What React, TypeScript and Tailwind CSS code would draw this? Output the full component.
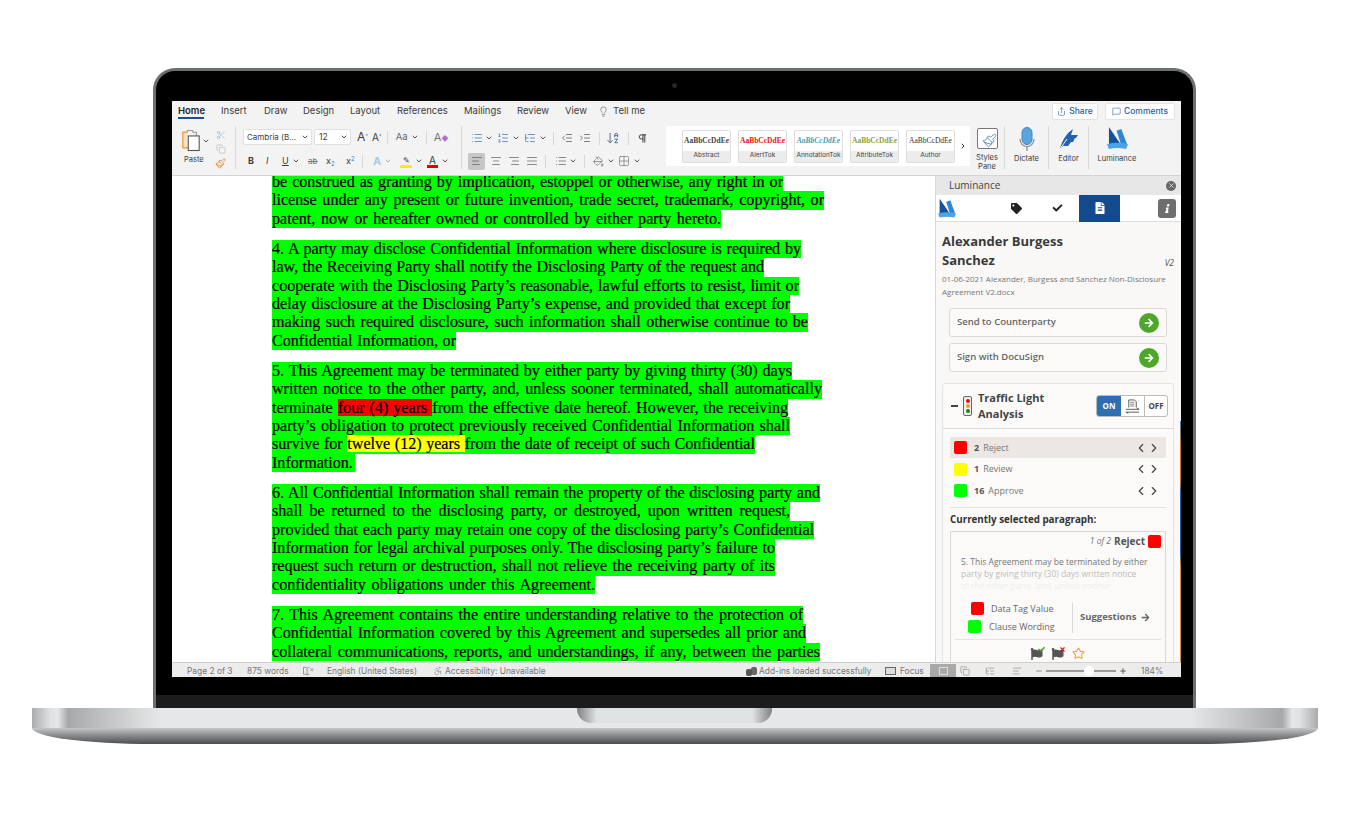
import {
  Accessibility,
  AlignCenter,
  AlignJustify,
  AlignLeft,
  AlignRight,
  ArrowDownAZ,
  ChevronDown,
  ChevronLeft,
  ChevronRight,
  Copy,
  Grid2x2,
  IndentDecrease,
  IndentIncrease,
  Lightbulb,
  List,
  ListOrdered,
  ListTree,
  MessageSquare,
  Minus,
  PaintBucket,
  Paintbrush,
  Pilcrow,
  Plus,
  Scissors,
  Share,
  Star,
  X,
} from 'lucide-react'
import { FaArrowRight, FaCheck, FaFileAlt, FaFlag, FaInfo, FaTag } from 'react-icons/fa'

type Seg = [string, 'r' | 'y'] | string
type Line = { w: number; t: Seg[] }

const PARAGRAPHS: Line[][] = [
  [
    { w: 511, t: ['be construed as granting by implication, estoppel or otherwise, any right in or'] },
    { w: 552, t: ['license under any present or future invention, trade secret, trademark, copyright, or'] },
    { w: 449, t: ['patent, now or hereafter owned or controlled by either party hereto.'] },
  ],
  [
    { w: 529, t: ['4. A party may disclose Confidential Information where disclosure is required by'] },
    { w: 492, t: ['law, the Receiving Party shall notify the Disclosing Party of the request and'] },
    { w: 527, t: ['cooperate with the Disclosing Party’s reasonable, lawful efforts to resist, limit or'] },
    { w: 518, t: ['delay disclosure at the Disclosing Party’s expense, and provided that except for'] },
    { w: 536, t: ['making such required disclosure, such information shall otherwise continue to be'] },
    { w: 184, t: ['Confidential Information, or'] },
  ],
  [
    { w: 520, t: ['5. This Agreement may be terminated by either party by giving thirty (30) days'] },
    { w: 550, t: ['written notice to the other party, and, unless sooner terminated, shall automatically'] },
    { w: 516, t: ['terminate ', ['four (4) years ', 'r'], 'from the effective date hereof. However, the receiving'] },
    { w: 518, t: ['party’s obligation to protect previously received Confidential Information shall'] },
    { w: 483, t: ['survive for ', ['twelve (12) years ', 'y'], 'from the date of receipt of such Confidential'] },
    { w: 83, t: ['Information.'] },
  ],
  [
    { w: 548, t: ['6. All Confidential Information shall remain the property of the disclosing party and'] },
    { w: 518, t: ['shall be returned to the disclosing party, or destroyed, upon written request,'] },
    { w: 542, t: ['provided that each party may retain one copy of the disclosing party’s Confidential'] },
    { w: 503, t: ['Information for legal archival purposes only. The disclosing party’s failure to'] },
    { w: 503, t: ['request such return or destruction, shall not relieve the receiving party of its'] },
    { w: 323, t: ['confidentiality obligations under this Agreement.'] },
  ],
  [
    { w: 531, t: ['7. This Agreement contains the entire understanding relative to the protection of'] },
    { w: 534, t: ['Confidential Information covered by this Agreement and supersedes all prior and'] },
    { w: 548, t: ['collateral communications, reports, and understandings, if any, between the parties'] },
  ],
]

function LuminanceLogo({ className }: { className: string }) {
  return (
    <svg viewBox="0 0 22 24" className={className}>
      <path d="M2 0 L15 19 L2 19 Z" fill="#14539b" />
      <path d="M10 4 L15 2 L21 18 L15 19 Z" fill="#2f86d6" />
      <path d="M0 18 Q11 15 22 18 L20 23 Q11 21 2 23 Z" fill="#4ba3e8" />
    </svg>
  )
}

function PasteIcon() {
  return (
    <svg viewBox="0 0 22 24" className="h-[23px] w-[21px]">
      <path d="M7 3 H2 V20 H8" fill="#fbe3c6" stroke="#f0a050" strokeWidth="1.6" />
      <path d="M7 3 V1 H13 V3 H17 V7" fill="none" stroke="#999" strokeWidth="1.2" />
      <rect x="8" y="7" width="12" height="16" fill="#fff" stroke="#555" strokeWidth="1.2" />
    </svg>
  )
}

function MicIcon() {
  return (
    <svg viewBox="0 0 16 24" className="h-[24px] w-[16px]">
      <rect x="3" y="0.5" width="10" height="17" rx="5" fill="#5aa5e0" stroke="#3d85c0" />
      <path d="M1 12 C1 22 15 22 15 12" fill="none" stroke="#888" strokeWidth="1.2" />
      <path d="M8 19 V24" stroke="#888" strokeWidth="1.2" />
    </svg>
  )
}

function BookXIcon() {
  return (
    <svg viewBox="0 0 12 10" className="h-[10px] w-[11px]" fill="none" stroke="#777" strokeWidth="0.8">
      <path d="M0.5 1 H3.5 L4.5 2 V9.5 L3.5 8.5 H0.5 Z" />
      <path d="M4.5 2 L5.5 1 H7 M5.5 8.5 H7 M4.5 9.5 L5.5 8.5" />
      <path d="M8 2 L11 5 M11 2 L8 5" />
    </svg>
  )
}

function CompareIcon() {
  return (
    <svg viewBox="0 0 16 16" className="h-[15px] w-[15px]" fill="none" stroke="#444" strokeWidth="0.9">
      <path d="M4 9 V1 H10 L12 3 V9" />
      <path d="M5.5 3.5 H10 M5.5 5.5 H10 M5.5 7.5 H10" strokeWidth="0.7" />
      <path d="M1 11 H15 M12.5 9.5 L15 11 M1 14 H15 M3.5 15.5 L1 14" />
    </svg>
  )
}

function Sep({ className }: { className: string }) {
  return <div className={`w-px shrink-0 bg-[#d8d8d8] ${className}`} />
}

function Caret({ className = 'ml-[2px]' }: { className?: string }) {
  return <ChevronDown className={`h-[8px] w-[8px] shrink-0 text-[#555] ${className}`} strokeWidth={3} />
}

function StyleCard(props: { label: string; sample: string; color: string; weight: string; italic?: boolean }) {
  return (
    <div className="flex h-[33px] w-[49px] flex-col overflow-hidden rounded-[2px] border border-[#dedede] bg-white">
      <div
        className={`flex h-[21px] items-center justify-center overflow-hidden whitespace-nowrap font-['Liberation_Serif',serif] text-[7.5px] ${props.color} ${props.weight} ${props.italic ? 'italic' : ''}`}
      >
        {props.sample}
      </div>
      <div className="flex h-[11px] items-center justify-center bg-[#ececec] text-[6.5px] text-[#444]">{props.label}</div>
    </div>
  )
}

function Ribbon() {
  return (
    <div className="h-[75px] shrink-0 border-b border-[#d4d4d4] bg-[#f3f3f3] font-['Inter',sans-serif] text-[#3b3b3b]">
      <div className="flex h-[25px] items-center pb-[5px] pl-[6px] text-[9.5px]">
        <div className="relative w-[43px] font-semibold text-[#222]">
          Home
          <div className="absolute left-0 top-[13px] h-[2px] w-[26px] bg-[#1f4e8c]" />
        </div>
        <div className="w-[43px]">Insert</div>
        <div className="w-[39px]">Draw</div>
        <div className="w-[47px]">Design</div>
        <div className="w-[47px]">Layout</div>
        <div className="w-[67px]">References</div>
        <div className="w-[53px]">Mailings</div>
        <div className="w-[48px]">Review</div>
        <div className="w-[33px]">View</div>
        <Lightbulb className="mr-[4px] h-[11px] w-[11px] text-[#666]" strokeWidth={1.5} />
        <div>Tell me</div>
        <div className="ml-auto mr-[6px] flex items-center gap-[7px] text-[#2a5c9a]">
          <div className="flex h-[17px] w-[46px] items-center justify-center gap-[3px] rounded-[2px] border border-[#e2e2e2] bg-white text-[8.5px] font-medium">
            <Share className="h-[9px] w-[9px]" strokeWidth={1.5} />
            Share
          </div>
          <div className="flex h-[17px] w-[70px] items-center justify-center gap-[3px] rounded-[2px] border border-[#e2e2e2] bg-white text-[8.5px] font-medium">
            <MessageSquare className="h-[9px] w-[9px]" strokeWidth={1.5} />
            Comments
          </div>
        </div>
      </div>

      <div className="flex h-[49px] items-start">
        {/* paste */}
        <div className="flex h-[46px] w-[63px] shrink-0 pl-[9px] pt-[3px]">
          <div className="w-[29px]">
            <div className="flex items-center">
              <PasteIcon />
              <Caret className="ml-[1px]" />
            </div>
            <div className="mt-[2px] pl-[3px] text-[7.5px]">Paste</div>
          </div>
          <div className="ml-[5px] flex flex-col items-center gap-[4px] pt-[1px]">
            <Scissors className="h-[10px] w-[10px] text-[#8db5d8]" strokeWidth={1.5} />
            <Copy className="h-[10px] w-[10px] text-[#b5b5b5]" strokeWidth={1.5} />
            <Paintbrush className="h-[11px] w-[11px] text-[#e58a2e]" strokeWidth={2} />
          </div>
        </div>
        <Sep className="h-[43px]" />

        {/* font */}
        <div className="h-[46px] w-[225px] shrink-0 pl-[7px] pt-[2px]">
          <div className="flex h-[18px] items-center">
            <div className="flex h-[16px] w-[69px] items-center justify-between whitespace-nowrap rounded-[2px] border border-[#e0e0e0] bg-white pl-[3px] pr-[2px] text-[8px]">
              Cambria (B...
              <Caret />
            </div>
            <div className="ml-[2px] flex h-[16px] w-[37px] items-center justify-between rounded-[2px] border border-[#e0e0e0] bg-white pl-[4px] pr-[2px] text-[8.5px]">
              12
              <Caret />
            </div>
            <div className="ml-[6px] text-[12px] leading-[14px]">A<sup className="text-[6px] text-[#4a7fb5]">^</sup></div>
            <div className="ml-[4px] text-[10px] leading-[14px]">A<sup className="text-[6px] text-[#4a7fb5]">˅</sup></div>
            <Sep className="ml-[5px] h-[13px]" />
            <div className="ml-[8px] flex items-center text-[9.5px] text-[#666]">Aa<Caret className="ml-[3px]" /></div>
            <Sep className="ml-[7px] h-[13px]" />
            <div className="ml-[7px] text-[11px] text-[#777]">A<span className="text-[7px] text-[#b36bd0]">◆</span></div>
          </div>
          <div className="mt-[6px] flex h-[18px] items-center pl-[5px] text-[9px]">
            <div className="w-[18px] font-bold">B</div>
            <div className="w-[16px] italic">I</div>
            <div className="flex w-[26px] items-center underline">U<Caret className="ml-[3px]" /></div>
            <div className="w-[18px] text-[8px] text-[#777] line-through">ab</div>
            <div className="w-[20px]">x<sub className="text-[6px] text-[#4a7fb5]">2</sub></div>
            <div className="w-[14px]">x<sup className="text-[6px] text-[#4a7fb5]">2</sup></div>
            <Sep className="ml-[2px] h-[13px]" />
            <div className="ml-[10px] flex w-[27px] items-center text-[11px] font-bold text-[#a9c9e6]">A<Caret className="ml-[3px] opacity-40" /></div>
            <div className="flex w-[27px] items-center">
              <div className="w-[12px] border-b-[3px] border-[#ffee00] text-center text-[8px] leading-[10px]">✎</div>
              <Caret className="ml-[3px]" />
            </div>
            <div className="flex items-center">
              <div className="w-[11px] border-b-[3px] border-[#e00000] text-center text-[10px] leading-[10px]">A</div>
              <Caret className="ml-[3px]" />
            </div>
          </div>
        </div>
        <Sep className="h-[43px]" />

        {/* paragraph */}
        <div className="h-[46px] w-[204px] shrink-0 pl-[9px] pt-[4px]">
          <div className="flex h-[16px] items-center text-[#555]">
            <List className="h-[12px] w-[12px] text-[#3a78b5]" strokeWidth={1.5} />
            <Caret className="ml-[2px]" />
            <ListOrdered className="ml-[4px] h-[12px] w-[12px] text-[#3a78b5]" strokeWidth={1.5} />
            <Caret className="ml-[3px]" />
            <ListTree className="ml-[4px] h-[12px] w-[12px] text-[#3a78b5]" strokeWidth={1.5} />
            <Caret className="ml-[3px]" />
            <Sep className="ml-[6px] h-[13px]" />
            <IndentDecrease className="ml-[7px] h-[12px] w-[12px]" strokeWidth={1.5} />
            <IndentIncrease className="ml-[6px] h-[12px] w-[12px]" strokeWidth={1.5} />
            <Sep className="ml-[8px] h-[13px]" />
            <ArrowDownAZ className="ml-[6px] h-[14px] w-[14px] text-[#3a5f8a]" strokeWidth={1.5} />
            <Sep className="ml-[8px] h-[13px]" />
            <Pilcrow className="ml-[8px] h-[11px] w-[11px] text-[#333]" strokeWidth={2} />
          </div>
          <div className="mt-[6px] flex h-[18px] items-center text-[#666]">
            <div className="-ml-[3px] flex h-[17px] w-[17px] items-center justify-center rounded-[2px] bg-[#c6c6c6]">
              <AlignLeft className="h-[12px] w-[12px]" strokeWidth={1.5} />
            </div>
            <AlignCenter className="ml-[5px] h-[12px] w-[12px]" strokeWidth={1.5} />
            <AlignRight className="ml-[6px] h-[12px] w-[12px]" strokeWidth={1.5} />
            <AlignJustify className="ml-[6px] h-[12px] w-[12px]" strokeWidth={1.5} />
            <Sep className="ml-[7px] h-[13px]" />
            <List className="ml-[9px] h-[12px] w-[12px]" strokeWidth={1.5} />
            <Caret className="ml-[2px]" />
            <Sep className="ml-[7px] h-[13px]" />
            <PaintBucket className="ml-[8px] h-[11px] w-[11px]" strokeWidth={1.5} />
            <Caret className="ml-[3px]" />
            <Grid2x2 className="ml-[3px] h-[12px] w-[12px]" strokeWidth={1.2} />
            <Caret className="ml-[3px]" />
          </div>
        </div>

        {/* styles */}
        <div className="flex h-[40px] w-[304px] shrink-0 items-center rounded-[1px] bg-white pl-[16px]">
          <div className="flex gap-[7px]">
            <StyleCard label="Abstract" sample="AaBbCcDdEe" color="text-[#444]" weight="font-bold" />
            <StyleCard label="AlertTok" sample="AaBbCcDdEe" color="text-[#f01010]" weight="font-bold" />
            <StyleCard label="AnnotationTok" sample="AaBbCcDdEe" color="text-[#4a9db0]" weight="font-bold" italic />
            <StyleCard label="AttributeTok" sample="AaBbCcDdEe" color="text-[#8aa040]" weight="font-bold" />
            <StyleCard label="Author" sample="AaBbCcDdEe" color="text-[#333]" weight="font-normal" />
          </div>
          <ChevronRight className="ml-[4px] h-[8px] w-[8px]" strokeWidth={3} />
        </div>

        <div className="flex h-[46px] w-[34px] shrink-0 flex-col items-center pt-[2px] text-[7.5px] leading-[9px]">
          <div className="flex h-[21px] w-[21px] items-end justify-end rounded-[2px] border border-[#777] bg-white">
            <Paintbrush className="h-[15px] w-[15px] text-[#3a78b5]" strokeWidth={1.3} />
          </div>
          <div className="mt-[4px] text-center">Styles<br />Pane</div>
        </div>
        <Sep className="h-[43px]" />
        <div className="flex h-[46px] w-[43px] shrink-0 flex-col items-center pt-[1px] text-[7.5px]">
          <MicIcon />
          <div className="mt-[2px]">Dictate</div>
        </div>
        <Sep className="h-[43px]" />
        <div className="flex h-[46px] w-[39px] shrink-0 flex-col items-center pt-[2px] text-[7.5px]">
          <svg viewBox="0 0 22 22" className="h-[22px] w-[22px]">
            <path d="M2 21 C4 12 9 5 15 1 L13 7 L20 7 L18 10 L12 10 L17 10 L15 14 L9 14 L13 14 L10 18 L5 18 Z" fill="#1f63b5" />
            <path d="M2 21 L9 11" stroke="#fff" strokeWidth="1" />
          </svg>
          <div className="mt-[3px]">Editor</div>
        </div>
        <Sep className="h-[43px]" />
        <div className="flex h-[46px] w-[56px] shrink-0 flex-col items-center pt-[1px] text-[7.5px]">
          <LuminanceLogo className="h-[23px] w-[21px]" />
          <div className="mt-[3px]">Luminance</div>
        </div>
      </div>
    </div>
  )
}

function Doc() {
  return (
    <div className="h-full w-[763px] shrink-0 overflow-hidden bg-white pl-[100px] font-['Liberation_Serif',serif] text-[16.1px] text-black [-webkit-text-stroke:0.2px_black]">
      <div className="-mt-[3px]">
        {PARAGRAPHS.map((lines, i) => (
          <div key={i} className="mb-[11.7px]">
            {lines.map((line, j) => (
              <div
                key={j}
                className="h-[18.4px] whitespace-nowrap bg-[#00ff00] leading-[18.4px] [text-align-last:justify]"
                style={{ width: line.w }}
              >
                {line.t.map((seg, k) =>
                  typeof seg === 'string' ? (
                    <span key={k}>{seg}</span>
                  ) : (
                    <span key={k} className={seg[1] === 'r' ? 'bg-[#ff0000]' : 'bg-[#ffff00]'}>
                      {seg[0]}
                    </span>
                  ),
                )}
              </div>
            ))}
          </div>
        ))}
      </div>
    </div>
  )
}

function Swatch({ color, className = '' }: { color: string; className?: string }) {
  return <div className={`h-[13px] w-[13px] shrink-0 rounded-[2px] ${color} ${className}`} />
}

function GreenButton({ label, className }: { label: string; className: string }) {
  return (
    <div className={`flex h-[29px] w-[218px] items-center justify-between rounded-[3px] border border-[#d9d9d9] bg-[#fbfaf8] pl-[7px] pr-[7px] text-[9.5px] font-semibold text-[#666] ${className}`}>
      {label}
      <div className="flex h-[20px] w-[20px] items-center justify-center rounded-full bg-[#4ea72a]">
        <FaArrowRight className="h-[10px] w-[10px] text-white" />
      </div>
    </div>
  )
}

function Nav() {
  return (
    <div className="ml-auto flex items-center text-[#444]">
      <ChevronLeft className="h-[14px] w-[14px]" strokeWidth={2} />
      <ChevronRight className="-ml-[1px] h-[14px] w-[14px]" strokeWidth={2} />
    </div>
  )
}

function Panel() {
  return (
    <div className="relative h-full flex-1 overflow-hidden border-l border-[#d6d6d6] bg-[#f9f8f6] font-['Open_Sans',sans-serif]">
      <div className="flex h-[19px] items-center justify-between bg-[#e7e7e7] pl-[13px] pr-[5px] text-[10px] text-[#444]">
        Luminance
        <div className="flex h-[10px] w-[10px] items-center justify-center rounded-full bg-[#666]">
          <X className="h-[7px] w-[7px] text-[#e7e7e7]" strokeWidth={3} />
        </div>
      </div>
      <div className="flex h-[27px] items-center border-b border-[#dedede] bg-white">
        <LuminanceLogo className="ml-[2px] h-[23px] w-[18px]" />
        <FaTag className="ml-[55px] h-[11px] w-[11px] text-[#222]" />
        <FaCheck className="ml-[30px] h-[10px] w-[11px] text-[#222]" />
        <div className="ml-[16px] flex h-[27px] w-[41px] items-center justify-center bg-[#134a8e]">
          <FaFileAlt className="h-[12px] w-[10px] text-white" />
        </div>
        <div className="ml-[38px] flex h-[19px] w-[18px] items-center justify-center rounded-[3px] bg-[#6e6e6e]">
          <FaInfo className="h-[9px] w-[9px] -skew-x-12 text-white" />
        </div>
      </div>

      <div className="pl-[6px] pr-[6px]">
        <div className="pt-[10px] text-[13px] font-bold leading-[19px] text-[#3a3a3a]">Alexander Burgess</div>
        <div className="flex items-end justify-between pr-[1px] text-[13px] font-bold leading-[19px] text-[#3a3a3a]">
          Sanchez
          <span className="text-[8.5px] font-normal italic leading-[14px] text-[#555]">V2</span>
        </div>
        <div className="mt-[2px] text-[8px] leading-[13px] text-[#777]">
          01-06-2021 Alexander, Burgess and Sanchez Non-Disclosure<br />Agreement V2.docx
        </div>
        <GreenButton label="Send to Counterparty" className="ml-[7px] mt-[10px]" />
        <GreenButton label="Sign with DocuSign" className="ml-[7px] mt-[6px]" />

        <div className="mt-[11px] h-[300px] w-[232px] rounded-t-[3px] border border-b-0 border-[#e4e4e4] bg-[#fbfaf8]">
          <div className="flex h-[45px] items-center border-b border-[#dcdcdc] pl-[8px]">
            <div className="h-[2px] w-[7px] bg-[#444]" />
            <div className="ml-[5px] flex h-[20px] w-[9px] flex-col items-center justify-center gap-[1px] rounded-[2px] border border-[#666] bg-[#eee]">
              <div className="h-[4px] w-[4px] rounded-full bg-[#e01010]" />
              <div className="h-[4px] w-[4px] rounded-full bg-[#f0a020]" />
              <div className="h-[4px] w-[4px] rounded-full bg-[#208020]" />
            </div>
            <div className="ml-[6px] w-[118px] text-[11px] font-bold leading-[16px] text-[#444]">
              Traffic Light<br />Analysis
            </div>
            <div className="flex h-[22px] w-[72px] overflow-hidden rounded-[3px] border border-[#bbb] bg-white text-[8px] font-bold">
              <div className="flex w-[24px] items-center justify-center bg-[#2f6eb0] text-white">ON</div>
              <div className="flex w-[24px] items-center justify-center border-r border-[#bbb] text-[#444]">
                <CompareIcon />
              </div>
              <div className="flex flex-1 items-center justify-center text-[#444]">OFF</div>
            </div>
          </div>

          <div className="px-[7px] pt-[8px]">
            <div className="flex h-[21px] items-center bg-[#ece7e3] pl-[4px] pr-[5px] text-[9px] text-[#777]">
              <Swatch color="bg-[#ff0000]" />
              <span className="ml-[7px] font-bold text-[#555]">2</span>
              <span className="ml-[4px]">Reject</span>
              <Nav />
            </div>
            <div className="flex h-[22px] items-center pl-[4px] pr-[5px] text-[9px] text-[#777]">
              <Swatch color="bg-[#ffff00]" />
              <span className="ml-[7px] font-bold text-[#555]">1</span>
              <span className="ml-[4px]">Review</span>
              <Nav />
            </div>
            <div className="flex h-[21px] items-center pl-[4px] pr-[5px] text-[9px] text-[#777]">
              <Swatch color="bg-[#00ff00]" />
              <span className="ml-[7px] font-bold text-[#555]">16</span>
              <span className="ml-[4px]">Approve</span>
              <Nav />
            </div>

            <div className="mt-[6px] border-t border-[#e2e2e2] pt-[5px] text-[9.8px] font-bold leading-[14px] text-[#333]">
              Currently selected paragraph:
            </div>

            <div className="mt-[4px] h-[141px] border border-[#d8d8d8] px-[4px] pt-[3px]">
              <div className="flex h-[13px] items-center justify-end text-[8.5px] italic text-[#777]">
                1 of 2
                <span className="ml-[3px] text-[10px] font-bold not-italic text-[#555]">Reject</span>
                <Swatch color="bg-[#ff0000]" className="ml-[3px]" />
              </div>
              <div className="mt-[8px] h-[36px] overflow-hidden pl-[6px] text-[8.5px] leading-[12px]">
                <div className="text-[#777]">5. This Agreement may be terminated by either</div>
                <div className="text-[#bbb]">party by giving thirty (30) days written notice</div>
                <div className="text-[#eee]">to the other party, and, unless sooner</div>
              </div>
              <div className="mt-[10px] flex h-[31px] items-center">
                <div className="w-[117px] pl-[13px] text-[9px] text-[#666]">
                  <div className="flex h-[18px] items-center pl-[3px]">
                    <Swatch color="bg-[#ff0000]" />
                    <span className="ml-[7px]">Data Tag Value</span>
                  </div>
                  <div className="flex h-[18px] items-center">
                    <Swatch color="bg-[#00ff00]" />
                    <span className="ml-[8px]">Clause Wording</span>
                  </div>
                </div>
                <Sep className="h-[30px] bg-[#cfcfcf]" />
                <div className="ml-[7px] flex items-center text-[9.5px] font-bold text-[#666]">
                  Suggestions
                  <FaArrowRight className="ml-[5px] h-[9px] w-[9px]" />
                </div>
              </div>
              <div className="mt-[6px] border-t border-[#e2e2e2] pt-[7px]">
                <div className="flex items-center justify-center gap-[8px] pr-[1px]">
                  <div className="relative">
                    <FaFlag className="h-[12px] w-[13px] text-[#555]" />
                    <FaCheck className="absolute -right-[2px] -top-[2px] h-[7px] w-[7px] text-[#3a9a2a]" />
                  </div>
                  <div className="relative">
                    <FaFlag className="h-[12px] w-[13px] text-[#555]" />
                    <X className="absolute -right-[2px] -top-[2px] h-[7px] w-[7px] text-[#d02020]" strokeWidth={4} />
                  </div>
                  <Star className="h-[13px] w-[13px] text-[#f0a030]" strokeWidth={2} />
                </div>
              </div>
            </div>
          </div>
        </div>
      </div>

      <div className="absolute right-0 top-[245px] h-[241px] w-[1px] bg-[linear-gradient(180deg,#3a7fc0_0%,#c9742a_10%,#c9742a_25%,#1d5fa8_30%,#1d5fa8_55%,#d08a30_60%,#d08a30_100%)]" />
    </div>
  )
}

function StatusBar() {
  return (
    <div className="flex h-[15px] shrink-0 items-center border-t border-[#d0d0d0] bg-[#ececec] pl-[15px] pt-[2px] font-['Inter',sans-serif] text-[8.4px] text-[#777]">
      <div className="w-[60px]">Page 2 of 3</div>
      <div className="w-[56px]">875 words</div>
      <BookXIcon />
      <div className="ml-[13px] w-[106px]">English (United States)</div>
      <Accessibility className="h-[10px] w-[10px]" strokeWidth={1.3} />
      <div className="ml-[2px] w-[301px]">Accessibility: Unavailable</div>
      <div className="flex">
        <div className="h-[7px] w-[6px] translate-y-[2px] rounded-[2px] bg-[#555]" />
        <div className="-ml-[1px] h-[8px] w-[6px] rounded-[2px] bg-[#666]" />
      </div>
      <div className="ml-[2px] w-[126px]">Add-ins loaded successfully</div>
      <div className="h-[8px] w-[11px] border border-[#666] bg-[#ddd]" />
      <div className="ml-[4px] w-[30px]">Focus</div>
      <div className="-mt-[1px] flex h-[14px] w-[26px] items-center justify-center bg-[#a9a9a9]">
        <div className="h-[8px] w-[9px] border border-[#ddd]" />
      </div>
      <Copy className="ml-[4px] h-[10px] w-[10px]" strokeWidth={1.3} />
      <ListTree className="ml-[15px] h-[10px] w-[10px]" strokeWidth={1.3} />
      <AlignLeft className="ml-[17px] h-[10px] w-[10px]" strokeWidth={1.3} />
      <Minus className="ml-[13px] h-[8px] w-[8px]" strokeWidth={2.5} />
      <div className="relative ml-[3px] h-[2px] w-[70px] bg-[#999]">
        <div className="absolute left-[38px] -top-[4px] h-[10px] w-[10px] rounded-full bg-white" />
      </div>
      <Plus className="ml-[3px] h-[8px] w-[8px] text-[#444]" strokeWidth={2.5} />
      <div className="ml-[14px]">184%</div>
    </div>
  )
}

export default function App() {
  return (
    <div className="flex h-[816px] w-[1350px] flex-col items-center overflow-hidden bg-white pr-[1px] pt-[68px]">
      <div className="flex h-[640px] w-[1043px] flex-col rounded-t-[22px] border-[3px] border-b-0 border-[#6d7072] bg-black">
        <div className="flex h-[30px] shrink-0 items-start justify-center pt-[12px]">
          <div className="h-[5px] w-[5px] rounded-full bg-[#262626]" />
        </div>
        <div className="ml-[16px] mr-[12px] flex h-[576px] shrink-0 flex-col overflow-hidden">
          <Ribbon />
          <div className="flex min-h-0 flex-1 bg-white">
            <Doc />
            <Panel />
          </div>
          <StatusBar />
        </div>
        <div className="mt-[18px] h-[13px] flex-1 bg-[#1c1c1c]" />
      </div>
      <div className="relative ml-[1px] h-[36px] w-[1286px] shrink-0">
        <div className="h-[20px] bg-[linear-gradient(90deg,#a9abac_0%,#e0e1e2_1.4%,#e6e7e8_2%,#a6a8a9_2.8%,#c3c6c6_6%,#e6e7e8_10%,#e6e7e8_90%,#c3c6c6_94%,#a6a8a9_97.2%,#e6e7e8_98%,#e0e1e2_98.6%,#a9abac_100%)]" />
        <div className="h-[16px] rounded-b-[120px_16px] bg-[linear-gradient(180deg,#c4c6c7_0%,#8b8d8e_45%,#4c4d4e_100%)]" />
        <div className="absolute left-[545px] top-0 h-[15px] w-[195px] rounded-b-[14px] bg-[linear-gradient(90deg,#7f8182_0%,#dfe2e2_10%,#dfe2e2_90%,#7f8182_100%)]" />
      </div>
    </div>
  )
}
